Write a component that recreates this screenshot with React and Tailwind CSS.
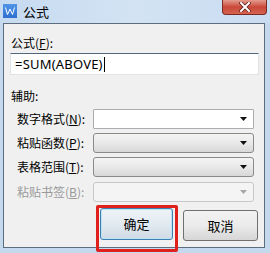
import React from 'react';

// ============================================================
// FORMULA DIALOG (Win7 style)
// ============================================================
const font = { fontFamily: '"Noto Sans CJK SC", "Noto Sans", sans-serif' };

const Arrow = ({ disabled }) => (
  <svg width="7" height="4" viewBox="0 0 7 4" className="shrink-0">
    <path d="M0 0h7L3.5 4z" fill={disabled ? '#a6a6a6' : '#111'} />
  </svg>
);

const Row = ({ label, hot, variant = 'button' }) => {
  const disabled = variant === 'disabled';
  const box =
    variant === 'edit'
      ? 'bg-white border border-[#abadb3] rounded-[1px]'
      : variant === 'disabled'
      ? 'bg-[#f4f4f4] border border-[#c6c9cc] rounded-[3px]'
      : 'bg-gradient-to-b from-[#f4f4f4] via-[#e9e9e9] to-[#d8d8d8] border border-[#8a8a8a] rounded-[3px]';

  return (
    <div className="flex items-center h-[20px]">
      <span
        className={`w-[76px] shrink-0 text-[12px] leading-[16px] ${disabled ? 'text-[#9a9a9a]' : 'text-black'}`}
      >
        {label}(<span className="underline">{hot}</span>):
      </span>
      <div className={`flex-1 h-full flex items-center justify-end pr-[6px] ${box}`}>
        <Arrow disabled={disabled} />
      </div>
    </div>
  );
};

export default function App() {
  return (
    <div
      className="relative w-[270px] h-[253px] bg-[#c4d8ee] flex flex-col overflow-hidden"
      style={font}
    >
      {/* Title bar */}
      <div className="h-[23px] shrink-0 flex items-start bg-gradient-to-r from-[#c6daf0] via-[#d3e3f4] to-[#c9dcf1]">
        <div className="mt-[4px] ml-[3px] w-[14px] h-[14px] bg-gradient-to-b from-[#4f95e8] to-[#2f6fd0] flex items-center justify-center">
          <svg width="10" height="8" viewBox="0 0 10 8">
            <polyline points="0.5,0.5 2.5,7.5 5,2 7.5,7.5 9.5,0.5" fill="none" stroke="#fff" strokeWidth="1" />
          </svg>
        </div>
        <span className="ml-[6px] mt-[3px] text-[13px] leading-[17px] text-black">公式</span>
        <div className="ml-auto mr-[3px] w-[45px] h-[15px] rounded-b-[4px] border border-t-0 border-[#7a2a22] bg-gradient-to-b from-[#e29b8e] via-[#c9473a] to-[#d5634f] flex items-center justify-center">
          <svg width="12" height="10" viewBox="0 0 12 10">
            <path d="M2 1l8 8M10 1l-8 8" stroke="#5a1c16" strokeWidth="3.4" strokeLinecap="square" />
            <path d="M2 1l8 8M10 1l-8 8" stroke="#fff" strokeWidth="2" strokeLinecap="square" />
          </svg>
        </div>
      </div>

      {/* Client area */}
      <div className="ml-[3px] mr-[5px] mb-[5px] flex-1 bg-[#f0f0f0] border border-[#5d6d7e] flex flex-col text-black">
        <div className="mt-[11px] ml-[7px] text-[12px] leading-[16px]">
          公式(<span className="underline">F</span>):
        </div>
        <div className="mt-[2px] ml-[6px] mr-[5px] h-[22px] bg-white border border-[#dfe3e8] border-t-[#52687f] flex items-center pl-[4px]">
          <span className="text-[13px] leading-[16px] tracking-[0.2px]" style={{ fontFamily: '"Noto Sans", sans-serif' }}>
            =SUM(ABOVE)
          </span>
          <span className="ml-[1px] w-[1px] h-[15px] bg-black" />
        </div>
        <div className="mt-[13px] ml-[7px] text-[12px] leading-[16px]">辅助:</div>
        <div className="mt-[5px] ml-[13px] mr-[10px] flex flex-col gap-[4px]">
          <Row label="数字格式" hot="N" variant="edit" />
          <Row label="粘贴函数" hot="P" />
          <Row label="表格范围" hot="T" />
          <div className="mt-[1px]">
            <Row label="粘贴书签" hot="B" variant="disabled" />
          </div>
        </div>

        {/* Buttons */}
        <div className="mt-[6px] flex justify-end gap-[10px] mr-[6px]">
          <button className="w-[73px] h-[32px] rounded-[3px] border border-[#3c7fb1] bg-gradient-to-b from-[#eef3f7] via-[#e2eaf1] to-[#cfdbe5] shadow-[inset_0_0_0_1px_#bfe2f5] text-[13px]">
            确定
          </button>
          <button className="mt-[2px] w-[75px] h-[31px] rounded-[3px] border border-[#707070] bg-gradient-to-b from-[#f2f2f2] via-[#ebebeb] to-[#d6d6d6] text-[13px]">
            取消
          </button>
        </div>
      </div>

      {/* Red highlight annotation */}
      <div className="absolute left-[96px] top-[205px] w-[82px] h-[47px] border-[3px] border-[#e0201c] rounded-[2px] pointer-events-none" />
    </div>
  );
}
